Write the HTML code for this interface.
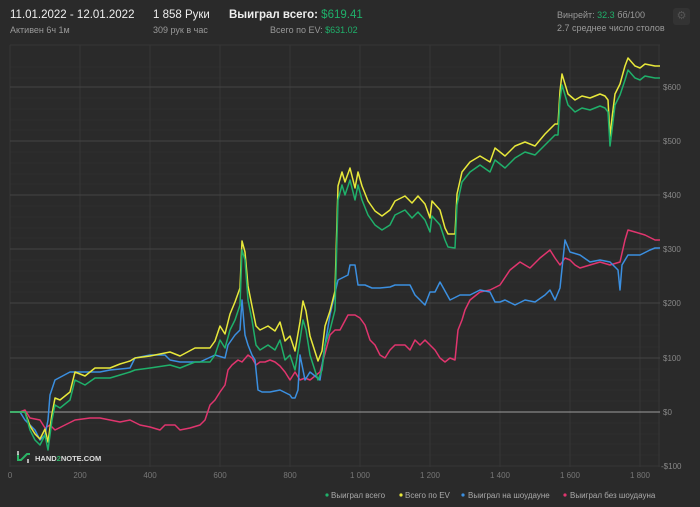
<!DOCTYPE html>
<html><head><meta charset="utf-8"><style>
body{margin:0;width:700px;height:507px;background:#2a2a2a;font-family:"Liberation Sans",sans-serif;overflow:hidden;position:relative;color:#ddd}
.t{position:absolute;white-space:nowrap}
.g{color:#1fb06a}
</style></head><body>
<div class="t" style="left:10px;top:9px;font-size:11.5px;color:#eee">11.01.2022 - 12.01.2022</div>
<div class="t" style="left:10px;top:25px;font-size:9px;color:#999">Активен 6ч 1м</div>
<div class="t" style="left:153px;top:9px;font-size:11.5px;color:#eee">1 858 Руки</div>
<div class="t" style="left:153px;top:25px;font-size:9px;color:#999">309 рук в час</div>
<div class="t" style="left:229px;top:9px;font-size:11.5px;color:#eee;font-weight:bold">Выиграл всего: <span class="g" style="font-weight:normal">$619.41</span></div>
<div class="t" style="left:270px;top:25px;font-size:9px;color:#999">Всего по EV: <span class="g">$631.02</span></div>
<div class="t" style="left:557px;top:10px;font-size:9px;color:#999">Винрейт: <span class="g">32.3</span> бб/100</div>
<div class="t" style="left:557px;top:23px;font-size:9px;color:#999">2.7 среднее число столов</div>
<div class="t" style="left:673px;top:8px;width:17px;height:17px;border-radius:3px;background:#333;color:#555;font-size:11px;text-align:center;line-height:17px">⚙</div>
<svg width="700" height="507" style="position:absolute;left:0;top:0">
<g stroke="#2f2f2f" stroke-width="1">
<line x1="10" y1="67" x2="660" y2="67"/><line x1="10" y1="78" x2="660" y2="78"/><line x1="10" y1="98" x2="660" y2="98"/><line x1="10" y1="109" x2="660" y2="109"/><line x1="10" y1="120" x2="660" y2="120"/><line x1="10" y1="130" x2="660" y2="130"/>
<line x1="10" y1="152" x2="660" y2="152"/><line x1="10" y1="163" x2="660" y2="163"/><line x1="10" y1="174" x2="660" y2="174"/><line x1="10" y1="184" x2="660" y2="184"/>
<line x1="10" y1="206" x2="660" y2="206"/><line x1="10" y1="217" x2="660" y2="217"/><line x1="10" y1="228" x2="660" y2="228"/><line x1="10" y1="238" x2="660" y2="238"/>
<line x1="10" y1="260" x2="660" y2="260"/><line x1="10" y1="271" x2="660" y2="271"/><line x1="10" y1="282" x2="660" y2="282"/><line x1="10" y1="292" x2="660" y2="292"/>
<line x1="10" y1="314" x2="660" y2="314"/><line x1="10" y1="325" x2="660" y2="325"/><line x1="10" y1="336" x2="660" y2="336"/><line x1="10" y1="347" x2="660" y2="347"/>
<line x1="10" y1="369" x2="660" y2="369"/><line x1="10" y1="380" x2="660" y2="380"/><line x1="10" y1="390" x2="660" y2="390"/><line x1="10" y1="401" x2="660" y2="401"/>
<line x1="10" y1="423" x2="660" y2="423"/><line x1="10" y1="434" x2="660" y2="434"/><line x1="10" y1="444" x2="660" y2="444"/><line x1="10" y1="455" x2="660" y2="455"/>
</g>
<g stroke="#363636" stroke-width="1">
<line x1="10" y1="45" x2="10" y2="467"/><line x1="80" y1="45" x2="80" y2="467"/><line x1="150" y1="45" x2="150" y2="467"/><line x1="220" y1="45" x2="220" y2="467"/><line x1="290" y1="45" x2="290" y2="467"/><line x1="360" y1="45" x2="360" y2="467"/><line x1="430" y1="45" x2="430" y2="467"/><line x1="500" y1="45" x2="500" y2="467"/><line x1="570" y1="45" x2="570" y2="467"/><line x1="640" y1="45" x2="640" y2="467"/><line x1="659" y1="45" x2="659" y2="467"/>
<line x1="10" y1="45" x2="660" y2="45"/><line x1="10" y1="466" x2="660" y2="466"/>
</g>
<g stroke="#444" stroke-width="1">
<line x1="10" y1="87" x2="660" y2="87"/><line x1="10" y1="141" x2="660" y2="141"/><line x1="10" y1="195" x2="660" y2="195"/><line x1="10" y1="249" x2="660" y2="249"/><line x1="10" y1="303" x2="660" y2="303"/><line x1="10" y1="358" x2="660" y2="358"/>
</g>
<line x1="10" y1="412" x2="660" y2="412" stroke="#888" stroke-width="1.2"/>
<g font-size="8" fill="#888" font-family="Liberation Sans">
<text x="663" y="90">$600</text><text x="663" y="144">$500</text><text x="663" y="198">$400</text><text x="663" y="252">$300</text><text x="663" y="306">$200</text><text x="663" y="361">$100</text><text x="663" y="415">$0</text><text x="661" y="469">-$100</text>
</g>
<g font-size="8" fill="#777" text-anchor="middle" font-family="Liberation Sans">
<text x="10" y="478">0</text><text x="80" y="478">200</text><text x="150" y="478">400</text><text x="220" y="478">600</text><text x="290" y="478">800</text><text x="360" y="478">1 000</text><text x="430" y="478">1 200</text><text x="500" y="478">1 400</text><text x="570" y="478">1 600</text><text x="640" y="478">1 800</text>
</g>
<g fill="none" stroke-width="1.5" stroke-linejoin="round">
<polyline stroke="#e0356e" points="10,412 20,412 25,410 30,418 40,420 45,428 50,425 55,430 65,425 75,420 90,418 100,418 110,420 120,422 130,420 140,425 150,427 160,430 165,425 175,425 180,430 190,428 200,425 205,420 210,405 215,400 220,392 225,385 228,370 232,365 238,360 242,362 248,355 252,358 256,365 260,362 265,362 270,360 275,362 280,366 285,372 290,380 295,372 300,380 305,378 310,380 320,372 330,335 335,330 340,330 348,315 355,315 360,318 365,325 370,340 375,345 380,355 385,358 390,350 395,345 405,345 410,350 415,340 420,345 425,340 430,345 435,350 440,358 445,362 450,358 455,360 458,330 462,320 465,310 470,300 480,292 490,290 500,285 510,270 520,262 530,268 540,258 550,250 555,258 560,265 565,258 570,260 575,265 580,268 590,265 600,262 610,265 620,262 625,240 628,230 635,232 645,235 655,240 660,240"/>
<polyline stroke="#3b8fe0" points="10,412 20,412 25,420 30,425 35,430 40,440 45,435 48,420 50,395 55,380 70,372 100,372 110,370 130,368 135,358 150,355 165,355 170,360 180,362 200,362 215,355 225,358 228,345 235,335 240,330 242,300 245,335 248,345 252,355 255,360 258,390 262,392 270,392 280,390 290,395 292,398 295,398 298,390 300,355 305,380 310,372 320,380 325,345 330,315 338,280 348,275 350,265 355,265 358,285 365,285 372,288 380,288 390,287 395,285 410,285 415,295 420,300 425,305 430,292 435,292 440,282 450,300 460,295 470,295 480,290 490,292 495,302 500,302 505,300 515,305 525,300 535,302 545,295 550,290 555,300 560,288 565,240 570,252 580,255 590,262 600,260 610,262 618,270 620,290 622,265 628,255 640,255 650,250 655,248 660,248"/>
<polyline stroke="#e8e83a" transform="translate(0,-4)" points="10,416 25,416 30,430 35,438 40,443 45,433 48,446 52,418 55,402 60,404 70,396 75,376 85,380 95,372 110,372 120,368 130,365 135,362 150,360 170,356 180,360 195,352 210,352 215,345 220,330 225,338 230,318 235,306 240,292 242,245 245,256 248,290 252,310 256,330 260,334 268,330 275,335 280,326 285,345 290,340 295,355 300,326 303,305 306,315 310,340 318,365 322,355 325,330 330,315 335,295 338,190 342,176 345,186 350,172 355,192 358,176 362,190 368,205 375,215 382,220 390,214 395,205 405,200 412,207 418,200 425,208 430,222 432,205 440,214 445,232 448,238 455,238 457,198 462,176 470,166 480,160 490,166 495,152 505,160 515,150 525,146 535,150 545,138 555,128 558,128 560,95 562,78 568,98 575,104 582,100 590,102 600,98 605,100 608,104 610,140 612,122 615,98 620,88 625,70 628,62 635,70 640,72 645,68 655,70 660,70"/>
<polyline stroke="#1fb06a" points="10,412 25,412 30,430 35,440 40,445 45,435 48,450 52,420 55,405 60,408 70,400 75,380 85,385 95,378 110,378 120,375 130,372 135,370 150,368 170,365 180,368 195,362 210,362 215,355 220,340 225,348 230,330 235,320 240,305 242,250 245,260 248,300 252,320 256,345 260,350 268,345 275,350 280,340 285,360 290,355 295,370 300,340 303,320 306,330 310,355 318,380 322,370 325,345 330,330 335,310 338,200 342,185 345,195 350,180 355,200 358,185 362,200 368,215 375,225 382,230 390,225 395,215 405,210 412,218 418,212 425,220 430,232 432,216 440,225 445,240 448,247 455,248 457,205 462,182 470,172 480,165 490,172 495,160 505,168 515,158 525,152 535,155 545,145 555,135 558,135 560,100 562,85 568,105 575,112 582,108 590,110 600,106 605,108 608,112 610,146 612,130 615,105 620,95 625,80 628,70 635,78 640,80 645,76 655,78 660,78"/>
</g>
<g stroke="#2bb566" stroke-width="2" fill="none"><path d="M18,454 v6 h3 l6,-6 h3"/></g>
<g stroke="#ddd" stroke-width="1.5"><line x1="18" y1="451" x2="18" y2="455"/><line x1="28" y1="459" x2="28" y2="463"/></g>
<text x="35" y="461" font-size="7.5" font-weight="bold" fill="#ddd" font-family="Liberation Sans">HAND<tspan fill="#2bb566">2</tspan>NOTE.COM</text>
<g font-size="8" fill="#aaa" font-family="Liberation Sans">
<circle cx="327" cy="495" r="1.6" fill="#1fb06a"/><text x="331" y="498">Выиграл всего</text>
<circle cx="401" cy="495" r="1.6" fill="#e8e83a"/><text x="405" y="498">Всего по EV</text>
<circle cx="463" cy="495" r="1.6" fill="#3b8fe0"/><text x="468" y="498">Выиграл на шоудауне</text>
<circle cx="565" cy="495" r="1.6" fill="#e0356e"/><text x="570" y="498">Выиграл без шоудауна</text>
</g>
</svg>
</body></html>
